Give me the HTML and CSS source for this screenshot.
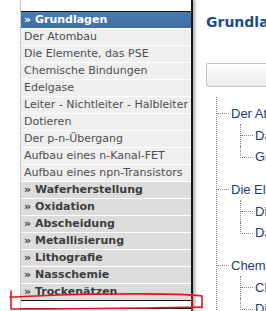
FILE: index.html
```html
<!DOCTYPE html>
<html lang="de">
<head>
<meta charset="utf-8">
<title>Grundlagen</title>
<link rel="stylesheet" href="styles.css">
</head>
<body>
<div class="page">
  <aside class="sidebar">
    <div class="sidebar-top"></div>
    <nav class="menu">
      <a class="item active">» Grundlagen</a>
      <a class="item">Der Atombau</a>
      <a class="item">Die Elemente, das PSE</a>
      <a class="item">Chemische Bindungen</a>
      <a class="item">Edelgase</a>
      <a class="item">Leiter - Nichtleiter - Halbleiter</a>
      <a class="item">Dotieren</a>
      <a class="item">Der p-n-Übergang</a>
      <a class="item">Aufbau eines n-Kanal-FET</a>
      <a class="item">Aufbau eines npn-Transistors</a>
      <a class="item section">» Waferherstellung</a>
      <a class="item section">» Oxidation</a>
      <a class="item section">» Abscheidung</a>
      <a class="item section">» Metallisierung</a>
      <a class="item section">» Lithografie</a>
      <a class="item section">» Nasschemie</a>
      <a class="item section">» Trockenätzen</a>
    </nav>
    <div class="sidebar-foot"></div>
  </aside>
  <main class="content">
    <h1 class="title">Grundlagen</h1>
    <div class="searchbox"></div>
    <ul class="tree">
      <li class="group">
        <div class="node"><span class="hline"></span><span class="label">Der Atombau</span></div>
        <ul class="sub">
          <li class="child"><span class="hline"></span><span class="label">Das Bohrsche Atommodell</span></li>
          <li class="child last"><span class="elbow"></span><span class="label">Grundbegriffe</span></li>
        </ul>
      </li>
      <li class="group">
        <div class="node"><span class="hline"></span><span class="label">Die Elemente, das PSE</span></div>
        <ul class="sub">
          <li class="child"><span class="hline"></span><span class="label">Die Elemente</span></li>
          <li class="child last"><span class="elbow"></span><span class="label">Das Periodensystem</span></li>
        </ul>
      </li>
      <li class="group">
        <div class="node"><span class="hline"></span><span class="label">Chemische Bindungen</span></div>
        <ul class="sub">
          <li class="child"><span class="hline"></span><span class="label">Chemische Bindungen</span></li>
          <li class="child last"><span class="elbow"></span><span class="label">Die Ionenbindung</span></li>
        </ul>
      </li>
    </ul>
  </main>
</div>
<svg class="markup" width="266" height="311" viewBox="0 0 266 311">
  <path d="M11,291 L11,309 M10,297 C40,296 70,294 110,294 C150,294 175,293 202,296 L202,308 M202,307 C140,308 70,309 11,309 M192,294 L192,311"
        fill="none" stroke="#e8121a" stroke-width="1.6" stroke-linecap="round"/>
</svg>
</body>
</html>
```

FILE: styles.css
```css
html, body {
  margin: 0;
  padding: 0;
  background: #ffffff;
  overflow: hidden;
}
body {
  font-family: "DejaVu Sans", Verdana, sans-serif;
  width: 266px;
  height: 311px;
  position: relative;
}
.page {
  display: flex;
  align-items: flex-start;
  height: 311px;
}
.sidebar {
  flex: 0 0 auto;
  margin-left: 20px;
  width: 170px;
  height: 311px;
  border-left: 1px solid #c9c9c9;
  border-right: 2px solid #161616;
  box-shadow: 2px 0 3px rgba(0, 0, 0, 0.35);
  background: #ffffff;
  display: flex;
  flex-direction: column;
}
.sidebar-top {
  height: 11px;
  border-bottom: 1px solid #161616;
}
.menu {
  height: 288px;
  overflow: hidden;
  border-bottom: 1px solid #161616;
  display: flex;
  flex-direction: column;
}
.item {
  flex: 0 0 auto;
  display: block;
  height: 16px;
  line-height: 16px;
  padding-left: 3px;
  border-bottom: 1px solid #ffffff;
  font-size: 11px;
  color: #4e4e4e;
  background: #efefef;
  white-space: nowrap;
  overflow: hidden;
}
.item.active {
  background: linear-gradient(#4a7bb2, #3f6ea4);
  color: #ffffff;
  font-weight: bold;
}
.item.section {
  background: #dcdcdc;
  color: #3c3c3c;
  font-weight: bold;
}
.sidebar-foot {
  height: 7px;
  border-bottom: 1px solid #161616;
}
.content {
  flex: 1 1 auto;
  min-width: 0;
  margin-left: 13px;
  overflow: hidden;
}
.title {
  margin: 0;
  padding-top: 14px;
  font-size: 14px;
  line-height: 16px;
  font-weight: bold;
  color: #1d4c8b;
  white-space: nowrap;
}
.searchbox {
  margin-top: 33px;
  width: 220px;
  height: 22px;
  border: 1px solid #c4c4c4;
  border-radius: 2px;
  background: linear-gradient(#ffffff, #ebebeb);
}
.tree {
  list-style: none;
  margin: 10px 0 0 10px;
  padding: 5px 0 0 0;
  border-left: 1px dotted #8a8a8a;
}
.group {
  margin-bottom: 10px;
}
.node {
  display: flex;
  align-items: center;
  height: 22px;
}
.hline {
  flex: 0 0 auto;
  width: 12px;
  border-top: 1px dotted #8a8a8a;
}
.label {
  margin-left: 2px;
  font-family: "Liberation Sans", Arial, sans-serif;
  font-size: 13px;
  color: #1b3d78;
  white-space: nowrap;
}
.sub {
  list-style: none;
  margin: 0 0 0 23px;
  padding: 0;
}
.child {
  display: flex;
  align-items: center;
  height: 22px;
  border-left: 1px dotted #8a8a8a;
}
.child.last {
  border-left: none;
  align-items: flex-start;
}
.elbow {
  flex: 0 0 auto;
  width: 12px;
  height: 11px;
  border-left: 1px dotted #8a8a8a;
  border-bottom: 1px dotted #8a8a8a;
}
.child.last .label {
  line-height: 22px;
  margin-left: 2px;
}
.markup {
  position: absolute;
  left: 0;
  top: 0;
  pointer-events: none;
}
```
